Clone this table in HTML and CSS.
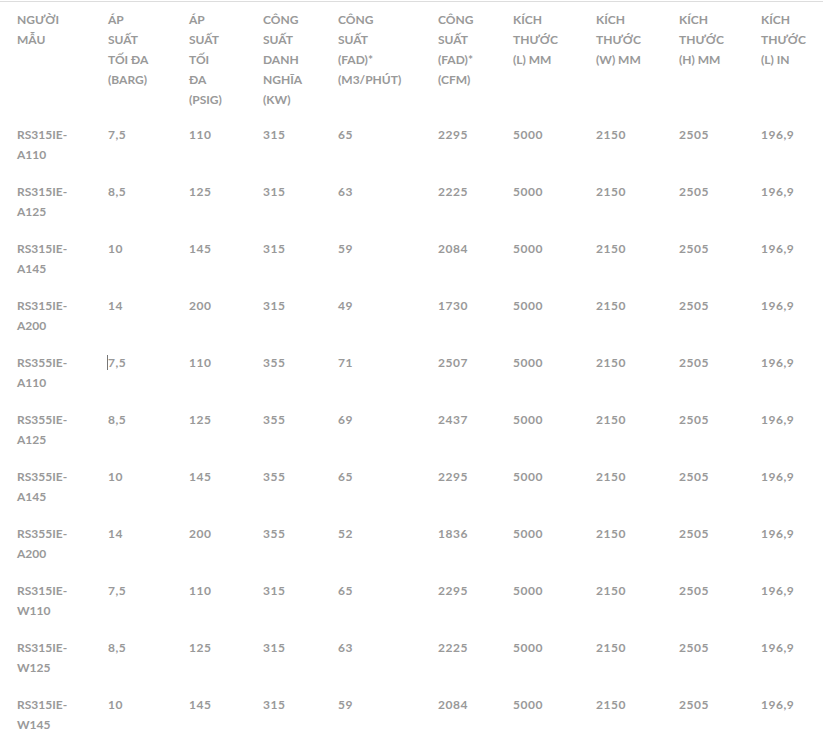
FILE: index.html
```html
<!DOCTYPE html>
<html lang="vi">
<head>
<meta charset="utf-8">
<link rel="stylesheet" href="styles.css">
</head>
<body>
<table class="spec">
<colgroup>
<col class="c1"><col class="c2"><col class="c3"><col class="c4"><col class="c5"><col class="c6"><col class="c7"><col class="c8"><col class="c9"><col class="c10">
</colgroup>
<thead>
<tr>
<th>NGƯỜI<br>MẪU</th>
<th>ÁP<br>SUẤT<br>TỐI ĐA<br>(BARG)</th>
<th>ÁP<br>SUẤT<br>TỐI<br>ĐA<br>(PSIG)</th>
<th>CÔNG<br>SUẤT<br>DANH<br>NGHĨA<br>(KW)</th>
<th>CÔNG<br>SUẤT<br>(FAD)*<br>(M3/PHÚT)</th>
<th>CÔNG<br>SUẤT<br>(FAD)*<br>(CFM)</th>
<th>KÍCH<br>THƯỚC<br>(L) MM</th>
<th>KÍCH<br>THƯỚC<br>(W) MM</th>
<th>KÍCH<br>THƯỚC<br>(H) MM</th>
<th>KÍCH<br>THƯỚC<br>(L) IN</th>
</tr>
</thead>
<tbody>
<tr><td>RS315IE-<br>A110</td><td>7,5</td><td>110</td><td>315</td><td>65</td><td>2295</td><td>5000</td><td>2150</td><td>2505</td><td>196,9</td></tr>
<tr><td>RS315IE-<br>A125</td><td>8,5</td><td>125</td><td>315</td><td>63</td><td>2225</td><td>5000</td><td>2150</td><td>2505</td><td>196,9</td></tr>
<tr><td>RS315IE-<br>A145</td><td>10</td><td>145</td><td>315</td><td>59</td><td>2084</td><td>5000</td><td>2150</td><td>2505</td><td>196,9</td></tr>
<tr><td>RS315IE-<br>A200</td><td>14</td><td>200</td><td>315</td><td>49</td><td>1730</td><td>5000</td><td>2150</td><td>2505</td><td>196,9</td></tr>
<tr><td>RS355IE-<br>A110</td><td><span class="caret">7,5</span></td><td>110</td><td>355</td><td>71</td><td>2507</td><td>5000</td><td>2150</td><td>2505</td><td>196,9</td></tr>
<tr><td>RS355IE-<br>A125</td><td>8,5</td><td>125</td><td>355</td><td>69</td><td>2437</td><td>5000</td><td>2150</td><td>2505</td><td>196,9</td></tr>
<tr><td>RS355IE-<br>A145</td><td>10</td><td>145</td><td>355</td><td>65</td><td>2295</td><td>5000</td><td>2150</td><td>2505</td><td>196,9</td></tr>
<tr><td>RS355IE-<br>A200</td><td>14</td><td>200</td><td>355</td><td>52</td><td>1836</td><td>5000</td><td>2150</td><td>2505</td><td>196,9</td></tr>
<tr><td>RS315IE-<br>W110</td><td>7,5</td><td>110</td><td>315</td><td>65</td><td>2295</td><td>5000</td><td>2150</td><td>2505</td><td>196,9</td></tr>
<tr><td>RS315IE-<br>W125</td><td>8,5</td><td>125</td><td>315</td><td>63</td><td>2225</td><td>5000</td><td>2150</td><td>2505</td><td>196,9</td></tr>
<tr><td>RS315IE-<br>W145</td><td>10</td><td>145</td><td>315</td><td>59</td><td>2084</td><td>5000</td><td>2150</td><td>2505</td><td>196,9</td></tr>
</tbody>
</table>
</body>
</html>
```
FILE: styles.css
```css
html, body {
  margin: 0;
  padding: 0;
  background: #ffffff;
}
body {
  padding-top: 1px;
  font-family: Lato, "Open Sans", sans-serif;
  font-weight: 700;
  font-size: 12px;
  color: #999999;
}
.spec {
  border-collapse: collapse;
  table-layout: fixed;
  width: 823px;
  border-top: 1px solid #dddddd;
}
.c1 { width: 108px; }
.c2 { width: 81px; }
.c3 { width: 74px; }
.c4 { width: 75px; }
.c5 { width: 100px; }
.c6 { width: 75px; }
.c7 { width: 83px; }
.c8 { width: 83px; }
.c9 { width: 82px; }
.c10 { width: 62px; }
.spec th,
.spec td {
  text-align: left;
  vertical-align: top;
  white-space: nowrap;
  line-height: 20px;
  font-weight: 700;
  padding: 8px 0 9px 0;
}
.spec th:first-child,
.spec td:first-child {
  padding-left: 17px;
}
.spec thead th {
  padding-top: 8px;
  padding-bottom: 7px;
}
.spec td + td {
  letter-spacing: 0.5px;
}
.caret {
  border-left: 1px solid #777777;
  margin-left: -1px;
}
```
